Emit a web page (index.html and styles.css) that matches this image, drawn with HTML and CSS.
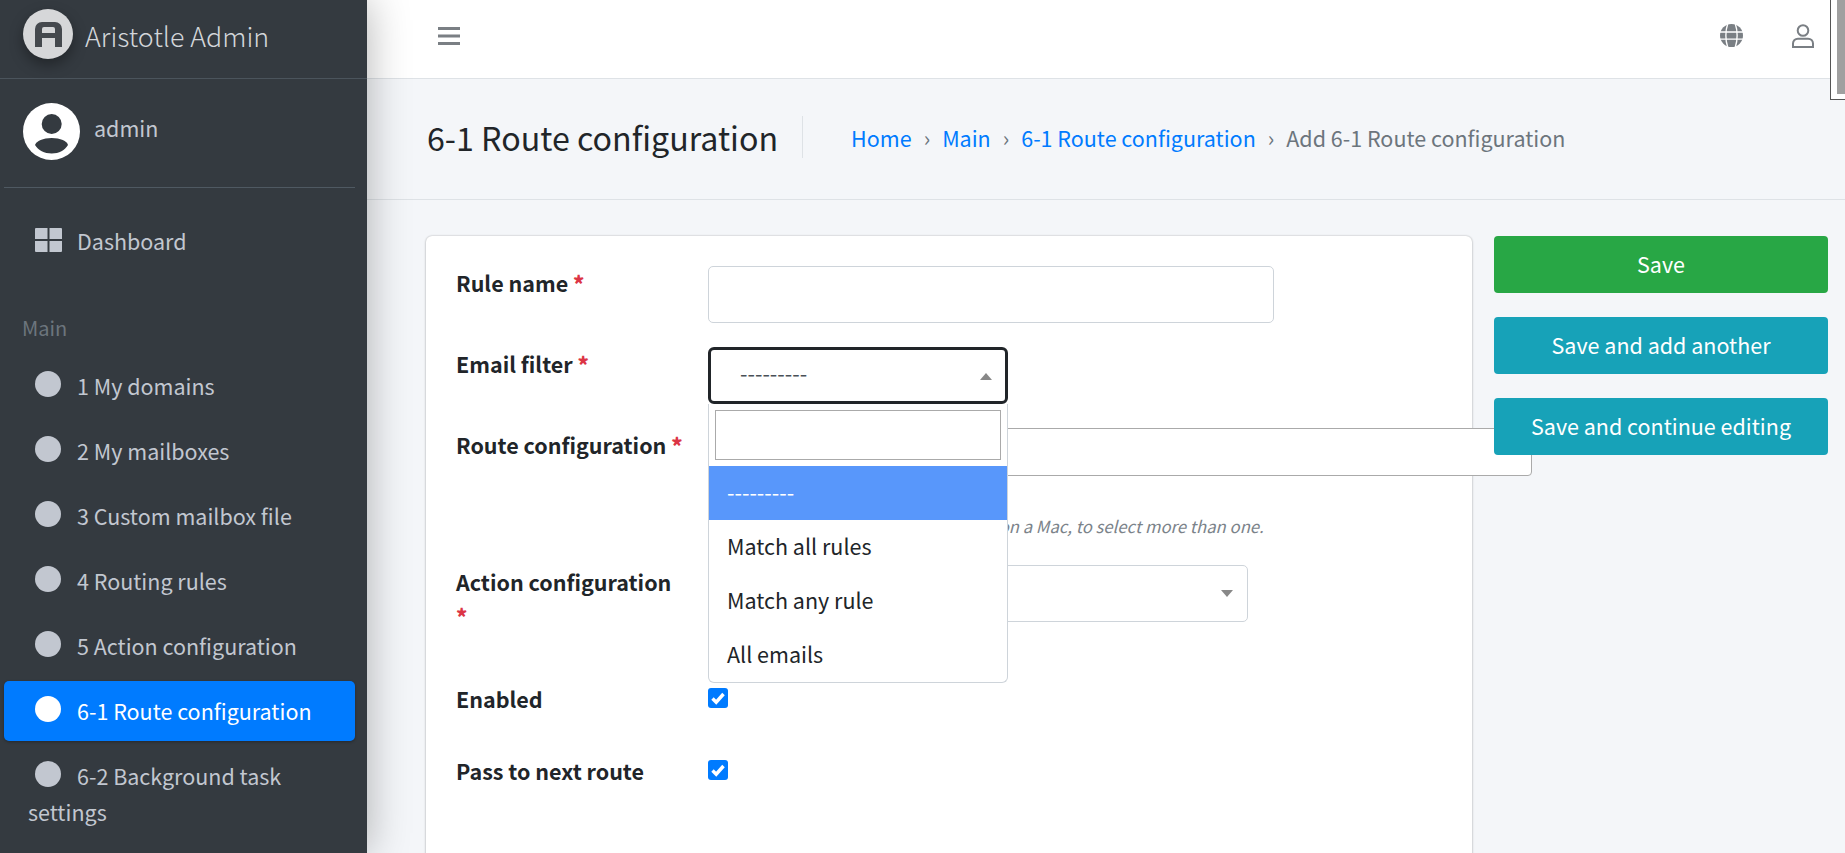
FILE: index.html
```html
<!DOCTYPE html>
<html lang="en">
<head>
<meta charset="utf-8">
<title>Add 6-1 Route configuration</title>
<link rel="stylesheet" href="styles.css">
</head>
<body>
<div class="app">
  <aside class="sidebar">
    <div class="brand">
      <span class="brand-logo">
        <svg viewBox="0 0 50 50" width="50" height="50"><path d="M12 38V20a7 7 0 0 1 7-7h13a7 7 0 0 1 7 7v18h-7v-9H19v9zM19 24h13v-4a2 2 0 0 0-2-2h-9a2 2 0 0 0-2 2z" fill="#45494e" fill-rule="evenodd"/></svg>
      </span>
      <span class="brand-text">Aristotle Admin</span>
    </div>
    <div class="user-panel">
      <svg class="avatar" viewBox="0 0 57 57" width="57" height="57"><circle cx="28.500" cy="28.500" r="28.500" fill="#fff"/><circle cx="28.700" cy="21" r="10" fill="#343a40"/><path d="M12 42c1.500-4 8-7 16.700-7S44 38 45 42c-3 5-9 8.500-16.300 8.500S15 47 12 42z" fill="#343a40"/></svg>
      <span class="user-name">admin</span>
    </div>
    <nav class="nav">
      <a class="nav-item nav-dash">
        <svg class="dash-icon" viewBox="0 0 27 24" width="27" height="24"><path d="M1 0h11.500v11H0V1a1 1 0 0 1 1-1zM14.500 0H26a1 1 0 0 1 1 1v10H14.500zM0 13h12.500v11H1a1 1 0 0 1-1-1zM14.500 13H27v10a1 1 0 0 1-1 1H14.500z" fill="#c2c7d0"/></svg>
        <span>Dashboard</span>
      </a>
      <div class="nav-header">Main</div>
      <a class="nav-item"><i class="dot"></i>1 My domains</a>
      <a class="nav-item"><i class="dot"></i>2 My mailboxes</a>
      <a class="nav-item"><i class="dot"></i>3 Custom mailbox file</a>
      <a class="nav-item"><i class="dot"></i>4 Routing rules</a>
      <a class="nav-item"><i class="dot"></i>5 Action configuration</a>
      <a class="nav-item active"><i class="dot"></i>6-1 Route configuration</a>
      <a class="nav-item"><i class="dot"></i>6-2 Background task settings</a>
    </nav>
  </aside>
  <div class="main">
    <header class="topbar">
      <svg class="burger" viewBox="0 0 22 18" width="22" height="18"><path d="M0 0h22v3H0zM0 7.500h22v3H0zM0 15h22v3H0z" fill="#7a7f84"/></svg>
      <div class="top-icons">
        <svg viewBox="0 0 24 24" width="23" height="23"><circle cx="12" cy="12" r="12" fill="#7a7f84"/><path d="M0 8.300h24M0 15.700h24M8 0C5.500 7 5.500 17 8 24M16 0c2.500 7 2.500 17 0 24" stroke="#fff" stroke-width="1.400" fill="none"/></svg>
        <svg viewBox="0 0 22 24" width="22" height="24"><circle cx="11" cy="6.500" r="5.300" fill="none" stroke="#7a7f84" stroke-width="2"/><path d="M1 23v-3.500c0-3 2.200-4.800 5-4.800h10c2.800 0 5 1.800 5 4.800V23z" fill="none" stroke="#7a7f84" stroke-width="2"/></svg>
      </div>
    </header>
    <div class="page-head">
      <h1 class="page-title">6-1 Route configuration</h1>
      <ol class="crumbs">
        <li><a>Home</a></li>
        <li><a>Main</a></li>
        <li><a>6-1 Route configuration</a></li>
        <li>Add 6-1 Route configuration</li>
      </ol>
    </div>
    <div class="content">
      <form class="card">
        <div class="row row-name">
          <label class="label">Rule name <b class="req">*</b></label>
          <div class="text-input"></div>
        </div>
        <div class="row row-filter">
          <label class="label">Email filter <b class="req">*</b></label>
          <div class="select-wrap">
            <div class="select focused">---------<i class="caret up"></i></div>
            <div class="dropdown">
              <div class="search-box"><div class="search"></div></div>
              <div class="option hi">---------</div>
              <div class="option">Match all rules</div>
              <div class="option">Match any rule</div>
              <div class="option">All emails</div>
            </div>
          </div>
        </div>
        <div class="row row-route">
          <label class="label">Route configuration <b class="req">*</b></label>
          <div class="route-field">
            <div class="multi"></div>
            <p class="help">Hold down "Control", or "Command" on a Mac, to select more than one.</p>
          </div>
        </div>
        <div class="row row-action">
          <label class="label label-wrap">Action configuration <b class="req">*</b></label>
          <div class="select select-action"><i class="caret"></i></div>
        </div>
        <div class="row row-check">
          <label class="label">Enabled</label>
          <span class="check"><svg viewBox="0 0 20 20" width="20" height="20"><path d="M4.500 10.500l3.700 3.700 7.300-8.200" fill="none" stroke="#fff" stroke-width="3.400"/></svg></span>
        </div>
        <div class="row row-check">
          <label class="label">Pass to next route</label>
          <span class="check"><svg viewBox="0 0 20 20" width="20" height="20"><path d="M4.500 10.500l3.700 3.700 7.300-8.200" fill="none" stroke="#fff" stroke-width="3.400"/></svg></span>
        </div>
      </form>
      <div class="actions">
        <button type="button" class="btn green">Save</button>
        <button type="button" class="btn teal">Save and add another</button>
        <button type="button" class="btn teal">Save and continue editing</button>
      </div>
    </div>
  </div>
  <div class="scroll-mark"><i></i></div>
</div>
</body>
</html>
```
FILE: styles.css
```css
* { box-sizing: border-box; }
html, body { margin: 0; height: 100%; overflow: hidden; }
body {
  font-family: "Noto Sans CJK SC", "Noto Sans CJK JP", "Noto Sans", sans-serif;
  font-size: 21.5px;
  line-height: 1.5;
  color: #212529;
  background: #f4f6f9;
}
.app { display: flex; height: 853px; position: relative; overflow: hidden; }

.sidebar {
  width: 367px;
  flex: none;
  background: #343a40;
  color: #c2c7d0;
  box-shadow: 0 0 40px rgba(0, 0, 0, .3);
  position: relative;
  z-index: 2;
}
.brand {
  height: 79px;
  padding: 9px 0 0 23px;
  display: flex;
  align-items: flex-start;
  gap: 12px;
  border-bottom: 1px solid #4b545c;
}
.brand-logo {
  width: 50px;
  height: 50px;
  border-radius: 50%;
  background: #d6d7d9;
  box-shadow: 0 6px 14px rgba(0, 0, 0, .35);
  display: block;
  flex: none;
}
.brand-logo svg { display: block; }
.brand-text { font-size: 26.8px; font-weight: 300; color: #d3d6da; line-height: 50px; padding-top: 2px; }
.user-panel {
  margin: 0 12px 0 4px;
  height: 109px;
  padding: 24px 0 0 19px;
  display: flex;
  align-items: flex-start;
  gap: 14px;
  border-bottom: 1px solid #4f5962;
}
.avatar { flex: none; }
.user-name { line-height: 50px; }
.nav { padding: 23px 12px 0 4px; }
.nav-item {
  display: block;
  padding: 12px 16px 12px 24px;
  margin-bottom: 5px;
  border-radius: 5px;
  color: #c2c7d0;
  min-height: 60px;
  line-height: 36px;
}
.nav-dash { display: flex; align-items: center; gap: 15px; padding-left: 31px; }
.dash-icon { flex: none; margin-top: -2px; }
.nav-header { padding: 38px 0 0 18px; height: 80px; color: #6c757d; font-size: 20px; line-height: 28px; }
.dot {
  display: inline-block;
  width: 26px;
  height: 26px;
  border-radius: 50%;
  background: #c2c7d0;
  margin: 0 16px 0 7px;
  vertical-align: -2px;
}
.nav-item.active {
  background: #007bff;
  color: #fff;
  box-shadow: 0 1px 3px rgba(0, 0, 0, .3);
}
.nav-item.active .dot { background: #fff; }

.main { flex: 1; min-width: 0; display: flex; flex-direction: column; }
.topbar {
  height: 79px;
  flex: none;
  background: #fff;
  border-bottom: 1px solid #dee2e6;
  display: flex;
  align-items: center;
  justify-content: space-between;
  padding: 0 31px 7px 71px;
}
.burger { display: block; }
.top-icons { display: flex; align-items: center; gap: 49px; }
.top-icons svg { display: block; }
.page-head {
  height: 121px;
  flex: none;
  border-bottom: 1px solid #dee2e6;
  display: flex;
  align-items: center;
  padding: 0 0 4px 60px;
}
.page-title {
  margin: 0;
  font-size: 32.2px;
  font-weight: 400;
  line-height: 42px;
  padding-right: 24px;
  border-right: 1px solid #dee2e6;
}
.crumbs { list-style: none; margin: 0; padding: 2px 0 0 48px; display: flex; color: #6c757d; }
.crumbs li + li::before { content: "›"; padding: 0 12px; color: #6c757d; }
.crumbs a { color: #007bff; }

.content { display: flex; gap: 22px; padding: 36px 16px 0 59px; align-items: flex-start; }
.card {
  width: 1046px;
  height: 700px;
  flex: none;
  background: #fff;
  border-radius: 6px;
  box-shadow: 0 0 2px rgba(0, 0, 0, .25), 0 1px 3px rgba(0, 0, 0, .15);
  padding: 30px 0 0 30px;
}
.row { display: flex; align-items: flex-start; }
.label { width: 252px; flex: none; font-weight: 700; line-height: 36px; margin-top: -1px; }
.row-filter .label { margin-top: -2px; }
.label-wrap { padding-right: 28px; line-height: 34px; margin-top: 0; }
.req { color: #dc3545; }
.row-filter { margin-top: 25px; }
.row-route { margin-top: 24px; }
.row-action { margin-top: 23px; }
.text-input {
  width: 566px;
  height: 57px;
  border: 1px solid #ced4da;
  border-radius: 5px;
  background: #fff;
}
.select-wrap { position: relative; width: 300px; }
.select {
  height: 57px;
  border: 1px solid #ced4da;
  border-radius: 5px;
  position: relative;
  background: #fff;
  color: #495057;
  padding: 7px 0 0 30px;
}
.select.focused { border: 3px solid #212529; padding: 7px 0 0 29px; border-radius: 6px; margin-top: -1px; }
.select-action { width: 540px; }
.caret {
  position: absolute;
  right: 14px;
  top: 24px;
  width: 0;
  height: 0;
  border-left: 6px solid transparent;
  border-right: 6px solid transparent;
  border-top: 7px solid #888;
}
.caret.up { border-top: 0; border-bottom: 7px solid #888; right: 13px; top: 23px; }
.dropdown {
  position: absolute;
  left: 0;
  right: 0;
  top: 56px;
  z-index: 5;
  background: #fff;
  border: 1px solid #ced4da;
  border-top: 0;
  border-radius: 0 0 6px 6px;
}
.search-box { padding: 6px; }
.search { height: 50px; border: 1px solid #aaa; }
.option { height: 54px; padding: 0 18px; line-height: 52px; }
.option.hi { background: #5897fb; color: #fff; }
.route-field { width: 824px; flex: none; }
.multi { height: 48px; border: 1px solid #aaa; border-radius: 4px; background: #fff; }
.help { margin: 34px 0 0; font-size: 16.7px; font-style: italic; color: #7b838a; line-height: 32px; white-space: nowrap; }
.row-action { height: 68px; }
.row-check { height: 72px; }
.row-action + .row-check { margin-top: 49px; }
.row-check .check {
  width: 20px;
  height: 20px;
  background: #007bff;
  border-radius: 3px;
  display: block;
  margin-top: 6px;
}
.check svg { display: block; }

.actions { width: 334px; flex: none; display: flex; flex-direction: column; gap: 24px; position: relative; }
.btn {
  height: 57px;
  border: 0;
  border-radius: 4px;
  color: #fff;
  font: inherit;
  padding: 0 0 1px;
}
.green { background: #28a745; }
.teal { background: #17a2b8; }
.scroll-mark {
  position: absolute;
  top: -2px;
  right: 0;
  width: 15px;
  height: 102px;
  border: 1px solid #555;
  border-right: 0;
  background: #fff;
  padding: 0 0 6px 6px;
  z-index: 6;
}
.scroll-mark i { display: block; height: 95px; background: #a0a0a0; }
```
